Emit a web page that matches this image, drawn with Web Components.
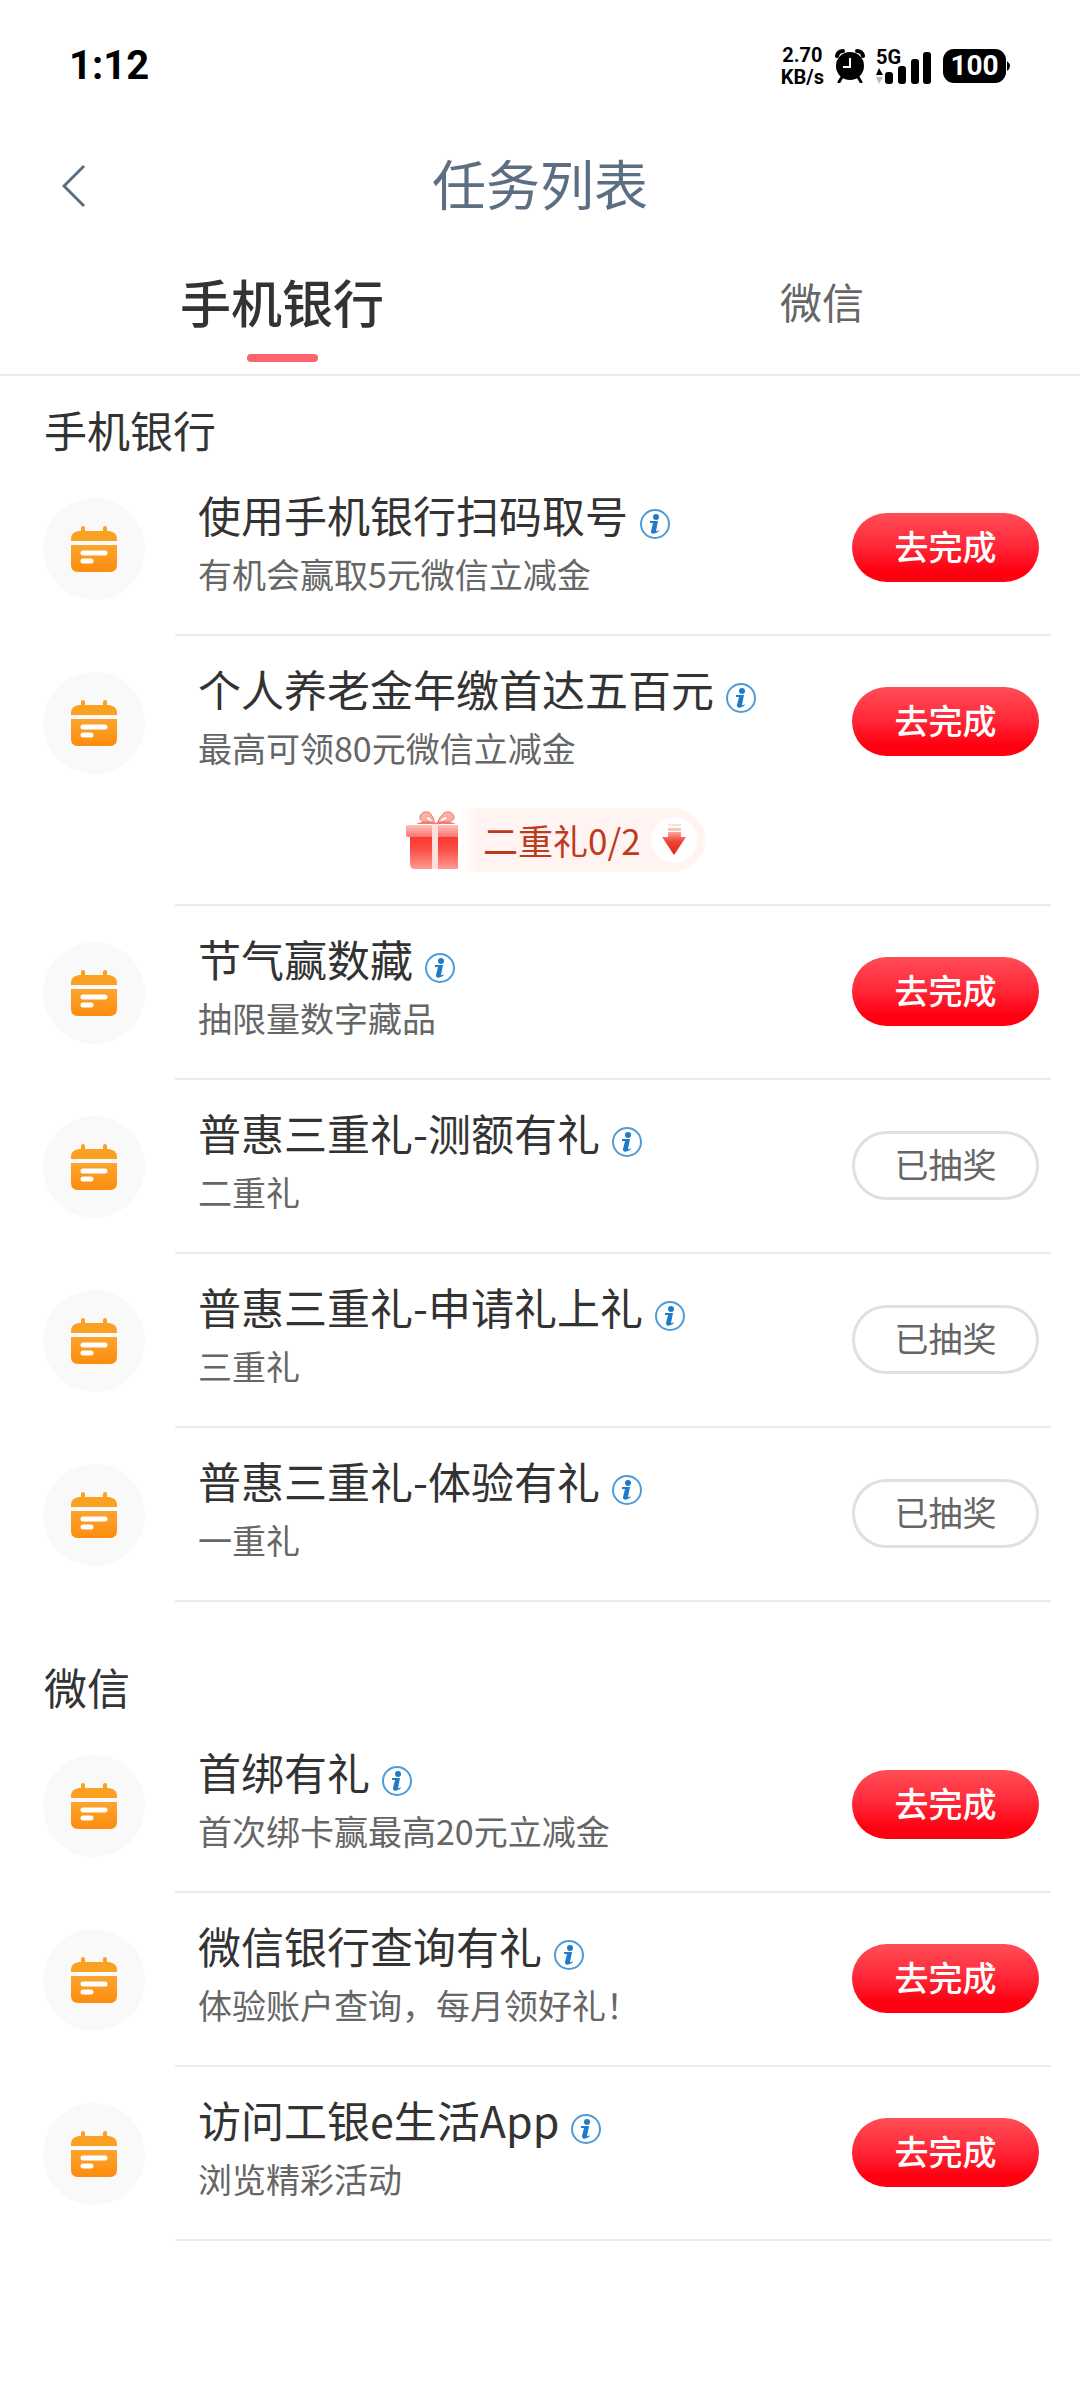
<!DOCTYPE html>
<html lang="zh-CN">
<head>
<meta charset="UTF-8">
<meta name="viewport" content="width=device-width, initial-scale=1">
<title>任务列表</title>
<style>
    body {
        margin: 0;
        background: #fff;
        color: #333;
        font-family: "Noto Sans CJK SC", sans-serif;
    }
</style>
</head>
<body>
<status-bar time="1:12"></status-bar>
<nav-header>任务列表</nav-header>
<tab-bar>
    <tab-item selected>手机银行</tab-item>
    <tab-item>微信</tab-item>
</tab-bar>
<main>
    <task-section heading="手机银行">
        <task-row name="使用手机银行扫码取号" desc="有机会赢取5元微信立减金"></task-row>
        <task-row name="个人养老金年缴首达五百元" desc="最高可领80元微信立减金">
            <gift-badge>二重礼0/2</gift-badge>
        </task-row>
        <task-row name="节气赢数藏" desc="抽限量数字藏品"></task-row>
        <task-row name="普惠三重礼-测额有礼" desc="二重礼" done></task-row>
        <task-row name="普惠三重礼-申请礼上礼" desc="三重礼" done></task-row>
        <task-row name="普惠三重礼-体验有礼" desc="一重礼" done></task-row>
    </task-section>
    <task-section heading="微信">
        <task-row name="首绑有礼" desc="首次绑卡赢最高20元立减金"></task-row>
        <task-row name="微信银行查询有礼" desc="体验账户查询，每月领好礼！"></task-row>
        <task-row name="访问工银e生活App" desc="浏览精彩活动"></task-row>
    </task-section>
</main>

<script>
class StatusBar extends HTMLElement {
    constructor() {
        super();
        this.attachShadow({ mode: 'open' });
        this.shadowRoot.innerHTML = `
            <style>
            :host {
                display: flex;
                align-items: center;
                justify-content: space-between;
                height: 132px;
                padding: 0 69px;
                box-sizing: border-box;
                color: #000;
                font-family: Roboto, sans-serif;
                font-weight: 700;
            }
            .time { font-size: 40px; line-height: 48px; }
            .right { display: flex; align-items: center; gap: 11px; }
            .speed {
                font-size: 20px;
                line-height: 22px;
                text-align: center;
            }
            .signal {
                position: relative;
                font-size: 20px;
                line-height: 20px;
            }
            .signal span {
                position: absolute;
                top: 0;
                left: 0;
            }
            .battery {
                display: flex;
                align-items: center;
                color: #fff;
                font-size: 28px;
                line-height: 34px;
            }
            .battery span {
                width: 63px;
                border-radius: 11px;
                background: #000;
                text-align: center;
            }
            svg { display: block; }
            </style>
            <span class="time">${this.getAttribute('time')}</span>
            <div class="right">
                <div class="speed">2.70<br>KB/s</div>
                <svg width="30" height="34" viewBox="0 0 30 34">
                    <circle cx="15" cy="17" r="14"/>
                    <path d="M2 7Q3 2 8 2M28 7Q27 2 22 2" fill="none" stroke="#000" stroke-width="4" stroke-linecap="round"/>
                    <path d="M7 28L4 33M23 28L26 33" stroke="#000" stroke-width="3" stroke-linecap="round"/>
                    <path d="M15 9V18H8" fill="none" stroke="#fff" stroke-width="2"/>
                </svg>
                <div class="signal">
                    <span>5G</span>
                    <svg width="56" height="38" viewBox="0 0 56 38">
                        <path d="M3 21L7 28H0Z"/>
                        <path d="M0 30H7L3 37Z" fill="#bbb"/>
                        <rect x="9" y="25" width="8" height="12" rx="3"/>
                        <rect x="22" y="19" width="8" height="18" rx="3"/>
                        <rect x="35" y="12" width="8" height="25" rx="3"/>
                        <rect x="47" y="5" width="8" height="32" rx="3"/>
                    </svg>
                </div>
                <div class="battery">
                    <span>100</span>
                    <svg width="5" height="12" viewBox="0 0 5 12">
                        <path d="M1 1Q7 6 1 11Z"/>
                    </svg>
                </div>
            </div>
        `;
    }
}

class NavHeader extends HTMLElement {
    constructor() {
        super();
        this.attachShadow({ mode: 'open' });
        this.shadowRoot.innerHTML = `
            <style>
            :host {
                display: grid;
                grid-template-columns: 110px 1fr 110px;
                align-items: center;
                height: 108px;
                color: #5c6f82;
            }
            button {
                display: flex;
                justify-content: center;
                padding: 0 0 0 38px;
                border: 0;
                background: none;
                color: inherit;
            }
            h1 {
                margin: 0;
                padding-bottom: 6px;
                font-size: 54px;
                line-height: 80px;
                font-weight: 400;
                text-align: center;
            }
            </style>
            <button aria-label="返回">
                <svg width="24" height="44" viewBox="0 0 24 44" fill="none" stroke="currentColor" stroke-width="3">
                    <path d="M22 2L2 22L22 42"/>
                </svg>
            </button>
            <h1><slot></slot></h1>
        `;
    }
}

class TabBar extends HTMLElement {
    constructor() {
        super();
        this.attachShadow({ mode: 'open' });
        this.shadowRoot.innerHTML = `
            <style>
            :host {
                display: flex;
                height: 136px;
                box-sizing: border-box;
                border-bottom: 2px solid #ebebeb;
            }
            ::slotted(*) { flex: 1; }
            </style>
            <slot></slot>
        `;
    }
}

class TabItem extends HTMLElement {
    constructor() {
        super();
        this.attachShadow({ mode: 'open' });
        this.shadowRoot.innerHTML = `
            <style>
            :host { display: block; }
            button {
                position: relative;
                width: 100%;
                height: 100%;
                padding: 0 0 12px 24px;
                border: 0;
                background: none;
                color: #666;
                font: 400 42px/64px "Noto Sans CJK SC", sans-serif;
            }
            :host([selected]) button {
                color: #333;
                font-size: 51px;
                font-weight: 500;
            }
            /* underline of the active tab */
            :host([selected]) button::after {
                content: '';
                position: absolute;
                left: calc(50% + 12px);
                bottom: 12px;
                width: 71px;
                height: 8px;
                margin-left: -35px;
                border-radius: 4px;
                background: #fc636b;
            }
            </style>
            <button><slot></slot></button>
        `;
    }
}

class TaskSection extends HTMLElement {
    constructor() {
        super();
        this.attachShadow({ mode: 'open' });
        this.shadowRoot.innerHTML = `
            <style>
            :host {
                display: block;
                padding-bottom: 31px;
            }
            h2 {
                margin: 0;
                padding: 22px 44px 2px;
                font-size: 43px;
                line-height: 62px;
                font-weight: 400;
            }
            </style>
            <h2>${this.getAttribute('heading')}</h2>
            <slot></slot>
        `;
    }
}

class TaskRow extends HTMLElement {
    constructor() {
        super();
        this.attachShadow({ mode: 'open' });
        const done = this.hasAttribute('done');
        this.shadowRoot.innerHTML = `
            <style>
            :host {
                display: flex;
                gap: 30px;
                padding: 0 29px 0 43px;
            }
            .icon {
                display: flex;
                align-items: center;
                justify-content: center;
                flex: none;
                width: 102px;
                height: 102px;
                margin-top: 36px;
                border-radius: 50%;
                background: #f9f9f9;
            }
            .body {
                flex: 1;
                padding: 22px 12px 30px 23px;
                border-bottom: 2px solid #ebebeb;
            }
            .line {
                display: flex;
                align-items: center;
                justify-content: space-between;
            }
            h3, p { margin: 0; font-weight: 400; }
            h3 {
                display: flex;
                align-items: center;
                gap: 12px;
                font-size: 43px;
                line-height: 60px;
            }
            p { color: #666; font-size: 34px; line-height: 60px; }
            .info {
                padding: 20px 0 0;
                border: 0;
                background: none;
            }
            svg { display: block; }
            .action {
                width: 187px;
                height: 69px;
                margin-top: 7px;
                padding: 0 0 3px;
                border: 0;
                border-radius: 35px;
                background: linear-gradient(#ff4e56, #ff2a3b 45%, #fe0010 85%);
                color: #fff;
                font: 500 34px/50px "Noto Sans CJK SC", sans-serif;
            }
            .action.done {
                border: 3px solid #e0e0e0;
                background: #fff;
                color: #666;
                font-weight: 400;
            }
            </style>
            <div class="icon">
                <svg width="46" height="48" viewBox="0 0 46 48">
                    <defs>
                        <linearGradient id="g" x1="0" y1="0" x2="0" y2="1">
                            <stop offset="0" stop-color="#fba530"/>
                            <stop offset="1" stop-color="#fc8c0d"/>
                        </linearGradient>
                    </defs>
                    <path d="M10 3a2 2 0 0 1 4 0V6H32V3a2 2 0 0 1 4 0V6H38Q46 7 46 14V16H0V14Q0 7 8 6H10Z" fill="#fba122"/>
                    <path d="M0 20H46V40Q46 47 39 47H7Q0 47 0 40Z" fill="url(#g)"/>
                    <path d="M12 28H34M12 36H20" stroke="#fff" stroke-width="5" stroke-linecap="round"/>
                </svg>
            </div>
            <div class="body">
                <div class="line">
                    <div>
                        <h3>${this.getAttribute('name')}
                            <button class="info" aria-label="说明">
                                <svg width="30" height="30" viewBox="0 0 30 30">
                                    <circle cx="15" cy="15" r="14" fill="#fff" stroke="#4e9bd8" stroke-width="2"/>
                                    <circle cx="16" cy="8" r="3" fill="#1f7ac8"/>
                                    <path d="M10 12H18L16 22Q16 23 19 21L18 23Q11 27 11 22L13 14H10Z" fill="#1f7ac8"/>
                                </svg>
                            </button>
                        </h3>
                        <p>${this.getAttribute('desc')}</p>
                    </div>
                    <button class="action ${done ? 'done' : ''}">${done ? '已抽奖' : '去完成'}</button>
                </div>
                <slot></slot>
            </div>
        `;
    }
}

class GiftBadge extends HTMLElement {
    constructor() {
        super();
        this.attachShadow({ mode: 'open' });
        this.shadowRoot.innerHTML = `
            <style>
            :host {
                display: flex;
                align-items: center;
                margin: 30px 0 2px 208px;
                color: #be3a1c;
                font-size: 35px;
                line-height: 64px;
            }
            .pill {
                display: flex;
                align-items: center;
                gap: 10px;
                margin-left: -6px;
                padding: 0 8px 0 25px;
                border-radius: 0 32px 32px 0;
                background: linear-gradient(90deg, #fff, #fff4f2 20px);
            }
            svg { display: block; }
            </style>
            <svg width="58" height="60" viewBox="0 0 58 60">
                <defs>
                    <linearGradient id="box" x1="0" y1="0" x2="0" y2="1">
                        <stop offset="0" stop-color="#f8362f"/>
                        <stop offset=".4" stop-color="#fb4a42"/>
                        <stop offset="1" stop-color="#fb9a90"/>
                    </linearGradient>
                    <linearGradient id="lid" x1="0" y1="0" x2="0" y2="1">
                        <stop offset="0" stop-color="#fdc0b8"/>
                        <stop offset="1" stop-color="#f9766f"/>
                    </linearGradient>
                </defs>
                <path d="M29 14C24 13 16 13 14 9C13 3 20 0 24 3Q28 7 29 14ZM31 14C36 13 44 13 48 9C49 3 42 0 38 3Q33 7 31 14Z" fill="#fcb1a8" stroke="#f0796f" stroke-width="1"/>
                <path d="M27 12Q20 11 20 7Q24 5 27 12ZM33 12Q40 11 42 7Q37 5 33 12Z" fill="#fff" stroke="#f59a92" stroke-width="1"/>
                <path d="M10 14Q20 9 29 13Q40 9 50 14Z" fill="#ef7d76"/>
                <path d="M4 25H55V54Q55 59 50 59H9Q4 59 4 54Z" fill="url(#box)"/>
                <rect x="0" y="15" width="58" height="12" rx="2" fill="url(#lid)"/>
                <rect x="26" y="14" width="6" height="45" fill="#fde0dc"/>
            </svg>
            <div class="pill">
                <slot></slot>
                <svg width="46" height="46" viewBox="0 0 46 46">
                    <defs>
                        <linearGradient id="arrow" x1="0" y1="0" x2="0" y2="1">
                            <stop offset="0" stop-color="#f9a79b"/>
                            <stop offset=".4" stop-color="#ee4636"/>
                            <stop offset="1" stop-color="#dd2412"/>
                        </linearGradient>
                    </defs>
                    <circle cx="23" cy="23" r="23" fill="#fff"/>
                    <path d="M17 7H30V9H17Z" fill="#fde0dc"/>
                    <path d="M17 11H30V14H17Z" fill="#fbc4bb"/>
                    <path d="M17 15H30V20H35L23 38L11 20H17Z" fill="url(#arrow)"/>
                </svg>
            </div>
        `;
    }
}

customElements.define('status-bar', StatusBar);
customElements.define('nav-header', NavHeader);
customElements.define('tab-bar', TabBar);
customElements.define('tab-item', TabItem);
customElements.define('task-section', TaskSection);
customElements.define('task-row', TaskRow);
customElements.define('gift-badge', GiftBadge);
</script>
</body>
</html>
